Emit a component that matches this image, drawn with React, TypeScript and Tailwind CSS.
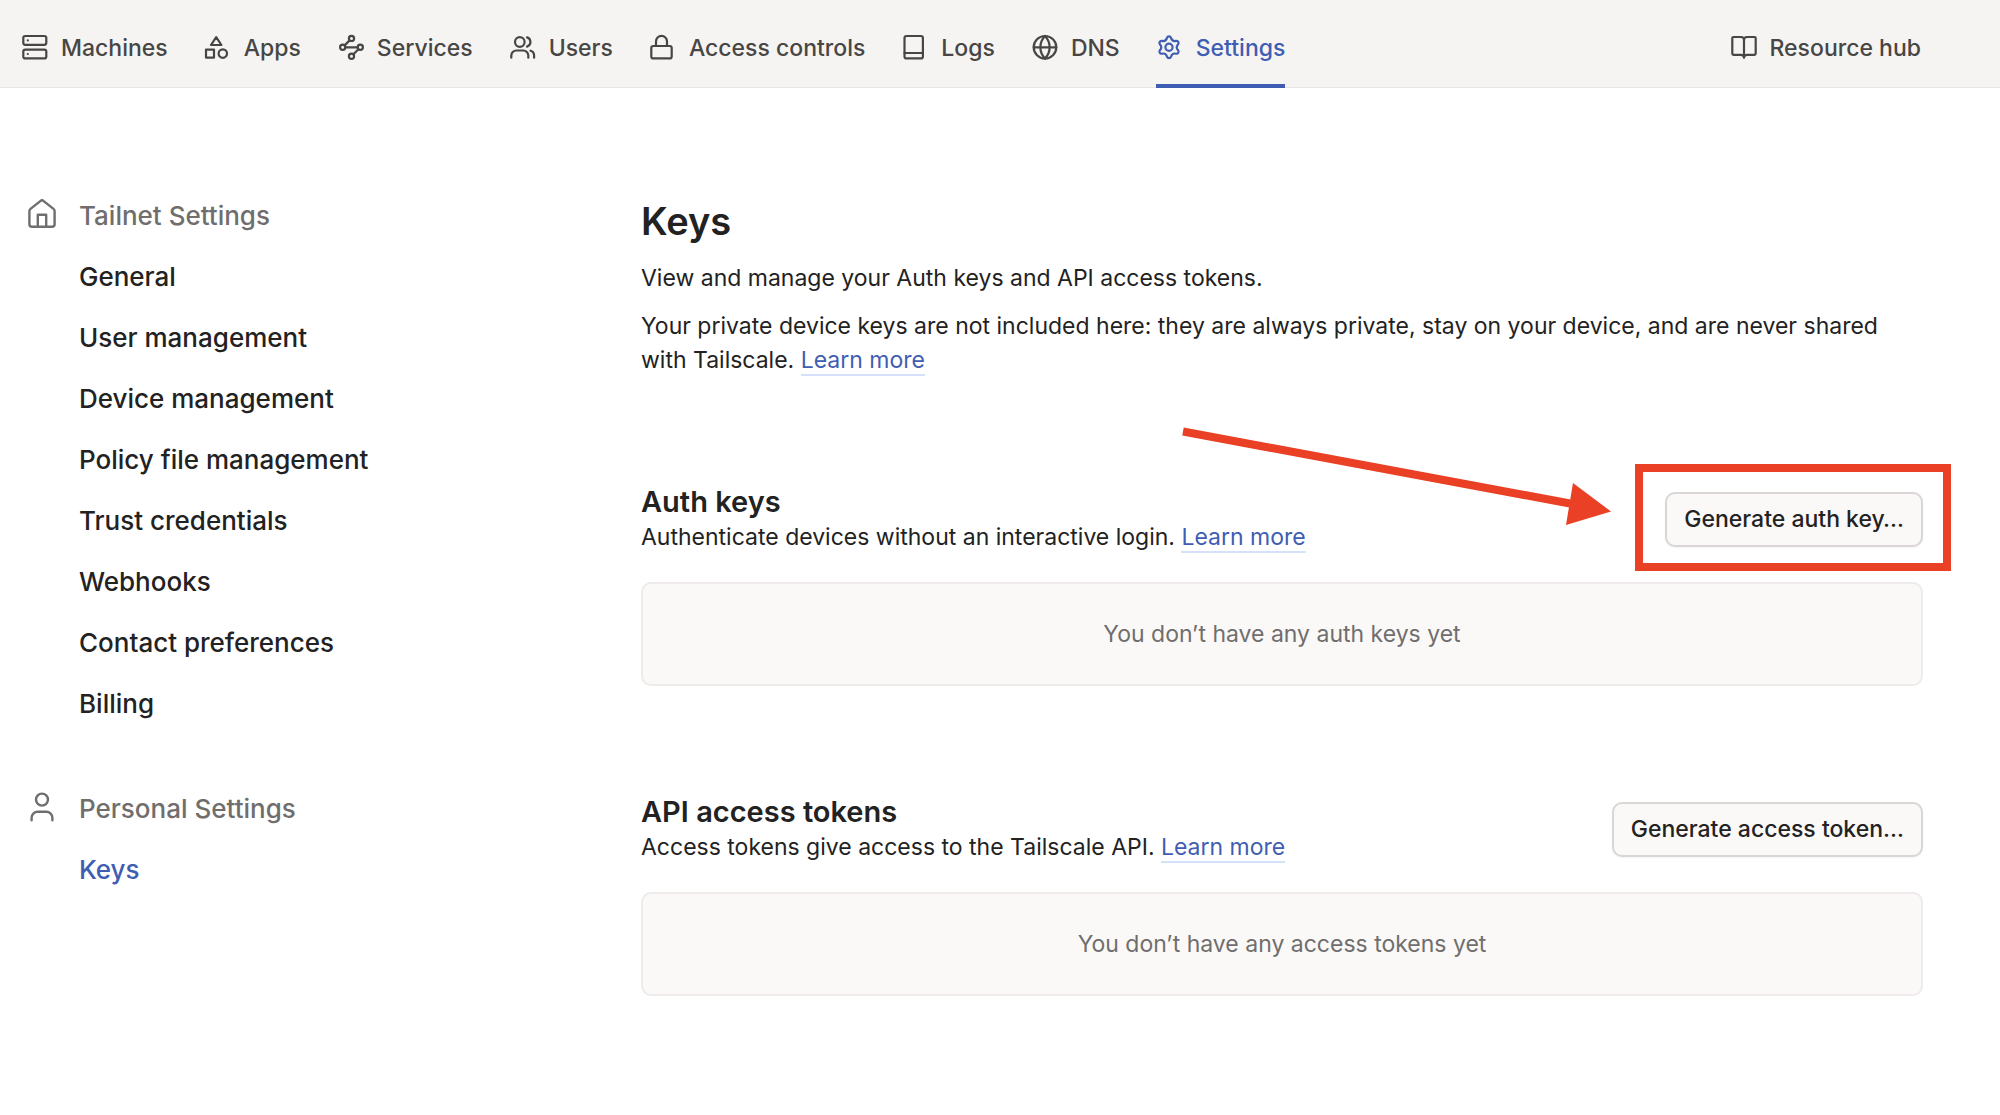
import type { ReactNode } from 'react'

const Icon = ({ children }: { children: ReactNode }) => (
  <svg
    viewBox="0 1 28 28"
    className="h-7 w-7 shrink-0"
    fill="none"
    stroke="currentColor"
    strokeWidth="2.2"
    strokeLinecap="round"
    strokeLinejoin="round"
    aria-hidden="true"
  >
    {children}
  </svg>
)

const navItems = [
  {
    label: 'Machines',
    icon: (
      <>
        <rect x="2.3" y="3" width="23" height="8.8" rx="2" />
        <rect x="2.3" y="16.6" width="23" height="8.8" rx="2" />
        <path d="M6.8 7.4h.01M6.8 21h.01" />
      </>
    ),
  },
  {
    label: 'Apps',
    icon: (
      <>
        <path d="M12.2 4.2 17.4 12H7z" />
        <rect x="2" y="16.6" width="8" height="8" />
        <circle cx="18.8" cy="20.6" r="4.2" />
      </>
    ),
  },
  {
    label: 'Services',
    icon: (
      <>
        <circle cx="14.5" cy="5.4" r="2.6" />
        <circle cx="5.7" cy="14.3" r="2.6" />
        <circle cx="23.3" cy="14.3" r="2.6" />
        <circle cx="14.5" cy="23.2" r="2.6" />
        <path d="M8.3 14.3h12.4M7.6 12.4l5-5M16.4 21.3l5-5" />
      </>
    ),
  },
  {
    label: 'Users',
    icon: (
      <>
        <circle cx="10.8" cy="9" r="4.8" />
        <path d="M2.3 24.7v-2.2a5 5 0 0 1 5-5h7a5 5 0 0 1 5 5v2.2M18 4.4a4.8 4.8 0 0 1 0 9.2M21.5 17.7a5 5 0 0 1 3.6 4.8v2.2" />
      </>
    ),
  },
  {
    label: 'Access controls',
    icon: (
      <>
        <rect x="2.3" y="13" width="20.4" height="12.4" rx="2" />
        <path d="M7 13V8.4a5.5 5.5 0 0 1 11 0V13" />
      </>
    ),
  },
  {
    label: 'Logs',
    icon: (
      <>
        <rect x="3.5" y="3" width="18.4" height="22.4" rx="2" />
        <path d="M3.5 20h18.4" />
      </>
    ),
  },
  {
    label: 'DNS',
    icon: (
      <>
        <circle cx="14" cy="14.3" r="11.3" />
        <path d="M2.7 14.3h22.6M14 3c6.2 6.6 6.2 16 0 22.6M14 3c-6.2 6.6-6.2 16 0 22.6" />
      </>
    ),
  },
  {
    label: 'Settings',
    active: true,
    icon: (
      <>
        <circle cx="13" cy="14.3" r="3.6" />
        <path d="M11 4.9a2.1 2.1 0 0 1 4 0Q16.2 8.9 20.1 7.9A2.1 2.1 0 0 1 22.1 11.3Q19.3 14.3 22.1 17.3A2.1 2.1 0 0 1 20.1 20.7Q16.2 19.7 15 23.7A2.1 2.1 0 0 1 11 23.7Q9.8 19.7 5.9 20.7A2.1 2.1 0 0 1 3.9 17.3Q6.7 14.3 3.9 11.3A2.1 2.1 0 0 1 5.9 7.9Q9.8 8.9 11 4.9z" />
      </>
    ),
  },
]

const tailnetLinks = [
  'General',
  'User management',
  'Device management',
  'Policy file management',
  'Trust credentials',
  'Webhooks',
  'Contact preferences',
  'Billing',
]

const Header = () => (
  <header className="flex h-[88px] items-stretch justify-between border-b border-[#e8e6e5] bg-[#f6f4f2] pt-2 pr-[79px] pl-[21px] text-[23px] font-medium text-[#474645]">
    <nav className="-mb-px flex gap-9">
      {navItems.map((item) => (
        <a
          key={item.label}
          href="#"
          className={
            item.active
              ? 'flex items-center gap-3 border-y-4 border-t-transparent border-b-[#3f5db3] text-[#3f5db3]'
              : 'flex items-center gap-3 border-y-4 border-transparent'
          }
        >
          <Icon>{item.icon}</Icon>
          {item.label}
        </a>
      ))}
    </nav>
    <a href="#" className="-mb-px flex items-center gap-3">
      <Icon>
        <path d="M14 6.8C14 5 12.6 4 11 4H3.5a1.2 1.2 0 0 0-1.2 1.2v15.4a1.2 1.2 0 0 0 1.2 1.2H11c1.8 0 3 1 3 3 0-2 1.2-3 3-3h7.5a1.2 1.2 0 0 0 1.2-1.2V5.2A1.2 1.2 0 0 0 24.5 4H17c-1.6 0-3 1-3 2.8zm0 0v18" />
      </Icon>
      Resource hub
    </a>
  </header>
)

const SidebarHeading = ({ icon, children }: { icon: ReactNode; children: ReactNode }) => (
  <h2 className="flex h-[61px] items-center gap-[21px] text-[#706e6d]">
    <svg
      viewBox="0 0 32 32"
      className="mb-1 h-8 w-8 shrink-0"
      fill="none"
      stroke="currentColor"
      strokeWidth="2.4"
      strokeLinecap="round"
      strokeLinejoin="round"
      aria-hidden="true"
    >
      {icon}
    </svg>
    {children}
  </h2>
)

const Sidebar = () => (
  <aside className="w-[615px] shrink-0 text-[26px] font-medium text-[#232222]">
    <SidebarHeading
      icon={
        <path d="M3.4 13.2a3 3 0 0 1 1.1-2.3l9.8-7.8a2.6 2.6 0 0 1 3.4 0l9.8 7.8a3 3 0 0 1 1.1 2.3v13a2.6 2.6 0 0 1-2.6 2.6H6a2.6 2.6 0 0 1-2.6-2.6zM11.8 28.8v-12h8.4v12" />
      }
    >
      Tailnet Settings
    </SidebarHeading>
    <ul className="pl-[53px]">
      {tailnetLinks.map((label) => (
        <li key={label} className="flex h-[61px] items-center">
          <a href="#">{label}</a>
        </li>
      ))}
    </ul>
    <div className="mt-11">
      <SidebarHeading
        icon={
          <>
            <circle cx="16" cy="8.6" r="6" />
            <path d="M5.6 29.2v-2.4a6 6 0 0 1 6-6h8.8a6 6 0 0 1 6 6v2.4" />
          </>
        }
      >
        Personal Settings
      </SidebarHeading>
      <ul className="pl-[53px]">
        <li className="flex h-[61px] items-center">
          <a href="#" className="text-[#3f5db3]">Keys</a>
        </li>
      </ul>
    </div>
  </aside>
)

const LearnMore = () => (
  <a href="#" className="border-b-2 border-[#d5e0fa] text-[#3f5db3]">
    Learn more
  </a>
)

// Red box and arrow that point at the wrapped button
const Highlight = ({ children }: { children: ReactNode }) => (
  <div className="relative shrink-0">
    {children}
    <div className="pointer-events-none absolute -top-7 -right-7 -bottom-6 -left-[30px] border-8 border-[#ea4025]" />
    <svg
      viewBox="0 0 430 96"
      className="pointer-events-none absolute right-full -top-[62px] mr-[54px] h-24 w-[430px] overflow-visible"
      fill="#ea4025"
      aria-hidden="true"
    >
      <path d="M2 1.5 389 73.5" stroke="#ea4025" strokeWidth="8" />
      <path d="m392 53 38 28.5L385 95z" />
    </svg>
  </div>
)

const Button = ({ children }: { children: ReactNode }) => (
  <button
    type="button"
    className="h-[55px] shrink-0 rounded-[10px] border-2 border-[#dad6d5] bg-[#faf9f8] px-[17px] text-[23px] font-medium text-[#232222] shadow-xs"
  >
    {children}
  </button>
)

type KeySectionProps = {
  title: string
  description: string
  action: ReactNode
  empty: string
}

const KeySection = ({ title, description, action, empty }: KeySectionProps) => (
  <section>
    <div className="flex items-center justify-between">
      <div>
        <h3 className="text-[29px] leading-9 font-semibold">{title}</h3>
        <p>
          {description} <LearnMore />
        </p>
      </div>
      {action}
    </div>
    <div className="mt-7 flex h-[104px] items-center justify-center rounded-[10px] border-2 border-[#eeebea] bg-[#faf9f8] text-[#706e6d]">
      {empty}
    </div>
  </section>
)

export default function App() {
  return (
    <div className="min-h-screen bg-white font-['Inter',sans-serif]">
      <Header />
      <div className="flex pt-[97px] pr-[77px] pb-16 pl-[26px]">
        <Sidebar />
        <main className="flex-1 pt-3 text-[23px] leading-[34px] text-[#232222]">
          <h1 className="text-[38px] leading-[48px] font-semibold">Keys</h1>
          <p className="mt-4">View and manage your Auth keys and API access tokens.</p>
          <p className="mt-3.5">
            Your private device keys are not included here: they are always private, stay on your
            device, and are never shared with Tailscale. <LearnMore />
          </p>
          <div className="mt-[107px] space-y-[108px]">
            <KeySection
              title="Auth keys"
              description="Authenticate devices without an interactive login."
              action={
                <Highlight>
                  <Button>Generate auth key…</Button>
                </Highlight>
              }
              empty="You don’t have any auth keys yet"
            />
            <KeySection
              title="API access tokens"
              description="Access tokens give access to the Tailscale API."
              action={<Button>Generate access token…</Button>}
              empty="You don’t have any access tokens yet"
            />
          </div>
        </main>
      </div>
    </div>
  )
}
